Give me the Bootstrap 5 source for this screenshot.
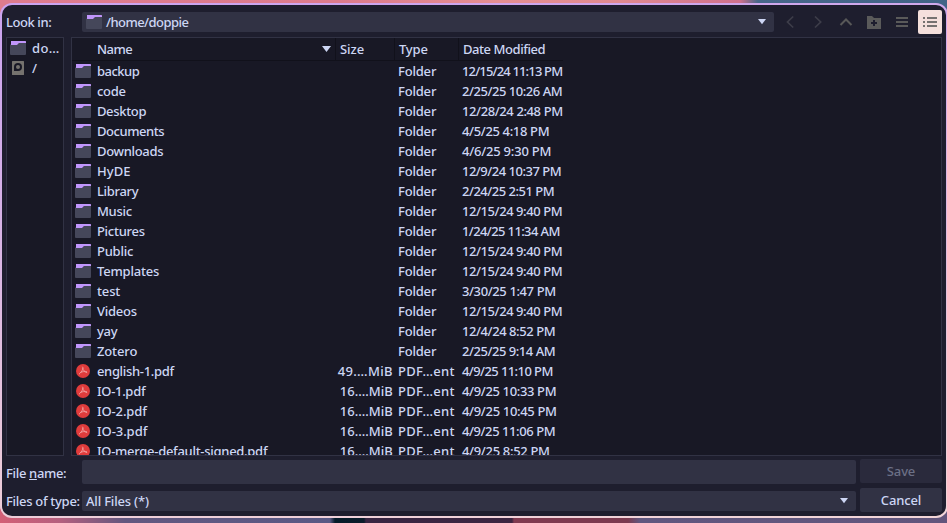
<!DOCTYPE html>
<html lang="en" data-bs-theme="dark">
<head>
<meta charset="utf-8">
<meta name="viewport" content="width=device-width, initial-scale=1">
<title>Save file</title>
<link href="https://cdn.jsdelivr.net/npm/bootstrap@5.3.0/dist/css/bootstrap.min.css" rel="stylesheet">
<style>
html,body{height:523px;overflow:hidden}
body{font:500 13px/20px "Noto Sans",sans-serif;color:#cdd6f4;padding-top:3px;
background:linear-gradient(90deg,#de7c8e 0,#dc7b8c 340px,#e58f92 500px,#e08a90 620px,#cf718d 740px,#47678a 758px,#416487 947px) 0 0/100% 16px no-repeat,
linear-gradient(90deg,#d35f76 0,#b5607f 60px,#62577f 125px,#595985 330px,#051b29 335px,#0b1c2b 364px,#382542 366px,#3c2541 512px,#803a50 514px,#7b3a50 628px,#60577f 640px,#62557c 947px) 0 100%/100% 16px no-repeat,#1e1e2e}
.frame{width:948px;height:515px;padding:2px;border-radius:12px;background:linear-gradient(135deg,#caa0f2 0,#caa0f2 4%,#d5aee8 35%,#edd0d8 70%,#f5dfdc 100%)}
.frame{background:linear-gradient(175deg,#cba3f0 0,#d6b1e6 35%,#e9c8da 75%,#f2d5d8 100%)}
.dialog-area{height:511px;border-radius:10px;background:#1e1e2e;padding:6px 4px 5px}
.t{display:inline-block;white-space:pre;transform-origin:0 50%}
.lab{width:76px;flex:none}
.field{background:#313244;border-radius:2px;height:20px}
.pane{background:#181825;border:1px solid #313244;height:419px;overflow:hidden}
.side{width:58px}
.files{width:872px}
.hd{height:23px;width:491px;border-bottom:1px solid #11111b;line-height:22px}
.hd>div+div{border-left:1px solid #11111b}
.c1{width:263px;flex:none}.c2{width:59px;flex:none}.c3{width:64px;flex:none}
.line{height:20px}
.ico{width:16px;height:16px;flex:none;display:block}
.tool{width:24px;height:24px;margin-left:4px;border-radius:2px;flex:none}
.tool svg,.tri{display:block}
.tool.on{background:#f5e0dc}
.push{width:82px;height:24px;border-radius:2px;background:#313244;line-height:24px;text-align:center}
.push.off{background:#2a2a3c;color:#6c7086}
</style>
<script src="https://cdn.jsdelivr.net/npm/bootstrap@5.3.0/dist/js/bootstrap.bundle.min.js"></script>
</head>
<body>
<svg width="0" height="0" class="position-absolute">
<symbol id="dir" viewBox="0 0 16 16"><path fill="#45475a" d="M0 4.5 7 4.5 9 3H16V14Q16 15 15 15H1Q0 15 0 14Z"/><path fill="#c096fb" d="M1 1H15.5Q16 1 16 2V3H9L7 5H1Z"/></symbol>
<symbol id="disk" viewBox="0 0 16 16"><rect x="2" y="1" width="12" height="14" rx=".5" fill="#75726e"/><path d="M4 11V7a4 4 0 1 1 4 4Z" fill="#181825"/><circle cx="8" cy="7" r="2" fill="#75726e"/></symbol>
<symbol id="pdf" viewBox="0 0 16 16"><circle cx="8" cy="8" r="7" fill="#e03c3c"/><path d="M7.4 3.7C8.8 4.5 7.3 8.6 4 11.2M7.6 4.7C8 7.2 9.7 9.2 12.2 9.7M5.2 9.6C7.3 8.6 9.6 8.3 12 8.8" fill="none" stroke="#f3a4a4" stroke-width=".85"/></symbol>
</svg>
<div class="frame">
<div class="dialog-area">
  <div class="d-flex align-items-center" style="height:22px">
    <div class="lab"><span class="t" data-w="44.5">Look in:</span></div>
    <div class="field d-flex align-items-center flex-shrink-0" style="width:692px">
      <svg class="ico ms-1"><use href="#dir"/></svg><span class="t ms-1" data-w="81.5">/home/doppie</span>
      <svg class="tri ms-auto me-2" width="8" height="6"><path d="M0 0H8L4 5.2Z" fill="#cdd6f4"/></svg>
    </div>
    <div class="tool" ><svg width="24" height="24"><path d="M15.2 6.5 9.5 12 15.2 17.5" fill="none" stroke="#3d3d49" stroke-width="1.7"/></svg></div>
    <div class="tool"><svg width="24" height="24"><path d="M9 6.5 14.7 12 9 17.5" fill="none" stroke="#3d3d49" stroke-width="1.7"/></svg></div>
    <div class="tool"><svg width="24" height="24"><path d="M6.5 15 12 9.5 17.5 15" fill="none" stroke="#585858" stroke-width="2"/></svg></div>
    <div class="tool"><svg width="24" height="24"><path d="M5 6H10L12 8H19V19H5ZM11 10V12H9V14H11V16H13V14H15V12H13V10Z" fill="#5a5a5a" fill-rule="evenodd"/></svg></div>
    <div class="tool"><svg width="24" height="24"><path d="M6 7H18V9H6ZM6 11H18V13H6ZM6 15H18V17H6Z" fill="#5a5a5a"/></svg></div>
    <div class="tool on"><svg width="24" height="24"><path d="M5 7H7V9H5ZM9 7H19V9H9ZM5 11H7V13H5ZM9 11H19V13H9ZM5 15H7V17H5ZM9 15H19V17H9Z" fill="#767270"/></svg></div>
  </div>
  <div class="d-flex mt-1">
    <div class="pane side">
      <div class="line d-flex align-items-center"><svg class="ico" style="margin-left:3px"><use href="#dir"/></svg><span class="t" style="margin-left:6px" data-w="27">do…</span></div>
      <div class="line d-flex align-items-center"><svg class="ico" style="margin-left:3px"><use href="#disk"/></svg><span class="t" style="margin-left:6px">/</span></div>
    </div>
    <div class="pane files" style="margin-left:7px">
      <div class="hd d-flex">
        <div class="c1 d-flex align-items-center"><span class="t" style="margin-left:25px" data-w="34.5">Name</span><svg class="tri ms-auto" style="margin-right:4px" width="9" height="7"><path d="M0 0H9L4.5 6Z" fill="#cdd6f4"/></svg></div>
        <div class="c2 ps-1"><span class="t" data-w="23.5">Size</span></div>
        <div class="c3 ps-1"><span class="t" data-w="28">Type</span></div>
        <div class="ps-1"><span class="t" data-w="81.5">Date Modified</span></div>
      </div>
      <div id="rows"></div>
    </div>
  </div>
  <div class="d-flex" style="padding-top:3px">
    <div class="lab" style="padding-top:4px"><span class="t" data-w="59.5">File <u>n</u>ame:</span></div>
    <div class="field" style="width:774px;height:24px;margin-top:1px"></div>
    <div class="push off ms-1"><span class="t" data-w="27.5">Save</span></div>
  </div>
  <div class="d-flex align-items-center mt-1" style="height:24px;padding-bottom:0">
    <div class="lab" style="padding-top:2px"><span class="t" data-w="73">Files of type:</span></div>
    <div class="field d-flex align-items-center" style="width:774px;margin-top:2px"><span class="t ms-1" data-w="62">All Files (*)</span><svg class="tri ms-auto me-2" width="8" height="6"><path d="M0 0H8L4 5.2Z" fill="#cdd6f4"/></svg></div>
    <div class="push ms-1"><span class="t" data-w="39.5">Cancel</span></div>
  </div>
</div>
</div>
<script>
// name, name width, size, date, date width
const files=[
["backup",41.5,"","12/15/24 11:13 PM",99.5],["code",28,"","2/25/25 10:26 AM",99.5],["Desktop",48.5,"","12/28/24 2:48 PM",100],
["Documents",66.5,"","4/5/25 4:18 PM",86.5],["Downloads",65.5,"","4/6/25 9:30 PM",88.5],["HyDE",33,"","12/9/24 10:37 PM",98.5],
["Library",40.5,"","2/24/25 2:51 PM",91.5],["Music",34,"","12/15/24 9:40 PM",99.5],["Pictures",47,"","1/24/25 11:34 AM",97],
["Public",35.5,"","12/15/24 9:40 PM",99.5],["Templates",61.5,"","12/15/24 9:40 PM",99.5],["test",22.5,"","3/30/25 1:47 PM",93],
["Videos",39,"","12/15/24 9:40 PM",99.5],["yay",19.5,"","12/4/24 8:52 PM",92.5],["Zotero",39.5,"","2/25/25 9:14 AM",92.5],
["english-1.pdf",76,"49.…MiB","4/9/25 11:10 PM",90],["IO-1.pdf",47.5,"16.…MiB","4/9/25 10:33 PM",93.5],["IO-2.pdf",49,"16.…MiB","4/9/25 10:45 PM",94],
["IO-3.pdf",49.5,"16.…MiB","4/9/25 11:06 PM",92.5],["IO-merge-default-signed.pdf",169.5,"16.…MiB","4/9/25 8:52 PM",87]];
document.getElementById("rows").innerHTML=files.map(([n,w,s,d,dw])=>`<div class="line d-flex align-items-center">
<div class="d-flex align-items-center c1"><svg class="ico" style="margin-left:3px"><use href="#${s?"pdf":"dir"}"/></svg><span class="t" style="margin-left:6px" data-w="${w}">${n}</span></div>
<div class="c2 text-end"><span class="t" style="margin-right:1px" data-w="${s[0]=="4"?54.5:52.5}">${s}</span></div>
<div class="c3" style="padding-left:4px"><span class="t" data-w="${s?56:37.5}">${s?"PDF…ent":"Folder"}</span></div>
<div style="padding-left:4px"><span class="t" data-w="${dw}">${d}</span></div></div>`).join("");
document.querySelectorAll("[data-w]").forEach(e=>{
  const n=e.textContent.length;
  if(n){e.style.letterSpacing=((e.dataset.w-e.getBoundingClientRect().width+.8)/n)+"px"}
});
</script>
</body>
</html>
